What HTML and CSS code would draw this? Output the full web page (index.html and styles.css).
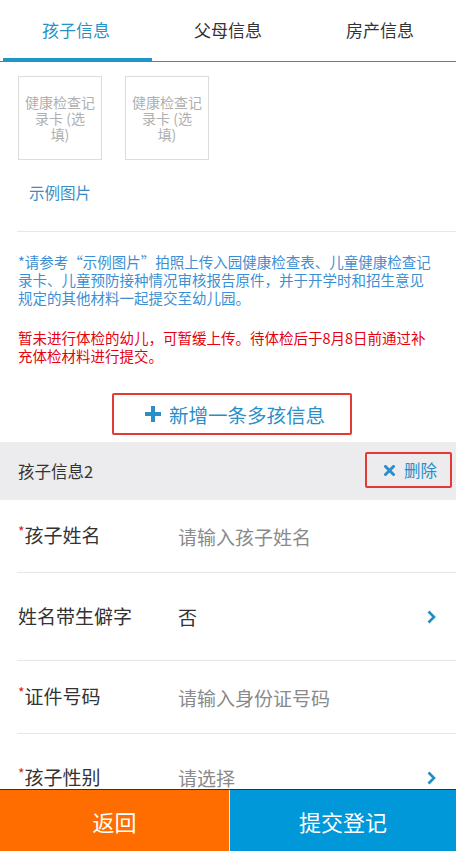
FILE: index.html
```html
<!DOCTYPE html>
<html lang="zh-CN">
<head>
    <meta charset="UTF-8">
    <meta name="viewport" content="width=device-width, initial-scale=1.0">
    <title>孩子信息</title>
    <link rel="stylesheet" href="styles.css">
</head>
<body>
    <div class="tabs">
        <div class="tab active">孩子信息</div>
        <div class="tab">父母信息</div>
        <div class="tab">房产信息</div>
    </div>

    <div class="upload-section">
        <div class="thumbs">
            <div class="thumb">健康检查记<br>录卡 (选<br>填)</div>
            <div class="thumb">健康检查记<br>录卡 (选<br>填)</div>
        </div>
        <div class="example-link">示例图片</div>
    </div>

    <div class="notes">
        <p class="note-blue">*请参考“示例图片”拍照上传入园健康检查表、儿童健康检查记录卡、儿童预防接种情况审核报告原件，并于开学时和招生意见规定的其他材料一起提交至幼儿园。</p>
        <p class="note-red">暂未进行体检的幼儿，可暂缓上传。待体检后于8月8日前通过补充体检材料进行提交。</p>
    </div>

    <div class="add-wrap">
        <button type="button" class="add-btn">
            <svg width="16" height="16" viewBox="0 0 16 16"><rect x="6" y="0" width="4" height="16" fill="#2a8fc9"/><rect x="0" y="6" width="16" height="4" fill="#2a8fc9"/></svg>
            新增一条多孩信息
        </button>
    </div>

    <div class="child-head">
        <span>孩子信息2</span>
        <button type="button" class="del-btn">
            <svg width="11" height="11" viewBox="0 0 11 11"><path d="M1.5 1.5 L9.5 9.5 M9.5 1.5 L1.5 9.5" stroke="#2a8fc9" stroke-width="3" stroke-linecap="round"/></svg>
            删除
        </button>
    </div>

    <div class="fields">
        <div class="field-row">
            <div class="label"><span class="req">*</span>孩子姓名</div>
            <div class="value placeholder">请输入孩子姓名</div>
        </div>
        <div class="field-row tall">
            <div class="label">姓名带生僻字</div>
            <div class="value">否</div>
            <svg class="chevron" width="9" height="14" viewBox="0 0 9 14"><polyline points="1.5,1.5 7,7 1.5,12.5" fill="none" stroke="#1d8fc4" stroke-width="2.6"/></svg>
        </div>
        <div class="field-row">
            <div class="label"><span class="req">*</span>证件号码</div>
            <div class="value placeholder">请输入身份证号码</div>
        </div>
        <div class="field-row tall">
            <div class="label"><span class="req">*</span>孩子性别</div>
            <div class="value placeholder">请选择</div>
            <svg class="chevron" width="9" height="14" viewBox="0 0 9 14"><polyline points="1.5,1.5 7,7 1.5,12.5" fill="none" stroke="#1d8fc4" stroke-width="2.6"/></svg>
        </div>
    </div>

    <div class="bottom-bar">
        <button type="button" class="btn-back">返回</button>
        <button type="button" class="btn-submit">提交登记</button>
    </div>
</body>
</html>
```

FILE: styles.css
```css
body {
    margin: 0;
    background: #fff;
    font-family: "Noto Sans CJK SC", "Noto Sans", sans-serif;
    color: #333;
    padding-bottom: 61px;
}
p {
    margin: 0;
}
button {
    font-family: inherit;
    background: none;
    cursor: pointer;
}
.tabs {
    display: flex;
    height: 61px;
    border-bottom: 1px solid #1e96c8;
}
.tab {
    flex: 1;
    display: flex;
    align-items: center;
    justify-content: center;
    font-size: 17px;
    color: #333;
    position: relative;
    padding-bottom: 3px;
}
.tab.active {
    color: #2494c6;
}
.tab.active::after {
    content: "";
    position: absolute;
    left: 3px;
    right: 0;
    bottom: 0;
    height: 3px;
    background: #1e96c8;
}
.upload-section {
    padding: 14px 18px 28px 1px;
    margin-left: 17px;
    border-bottom: 1px solid #e8e8e8;
}
.thumbs {
    display: flex;
    gap: 23px;
}
.thumb {
    width: 82px;
    height: 82px;
    border: 1px solid #dcdcdc;
    display: flex;
    align-items: center;
    justify-content: center;
    text-align: center;
    font-size: 14px;
    line-height: 16px;
    color: #b0b0b0;
}
.example-link {
    margin-top: 21px;
    padding-left: 11px;
    font-size: 15.5px;
    line-height: 22px;
    color: #3a8dc4;
}
.notes {
    padding: 21px 18px 0;
}
.note-blue {
    font-size: 14.5px;
    line-height: 18px;
    color: #3c8fd3;
}
.note-red {
    margin-top: 22px;
    font-size: 14.5px;
    line-height: 18px;
    color: #e8000e;
}
.add-wrap {
    display: flex;
    padding: 28px 0 0 112px;
}
.add-btn {
    width: 240px;
    height: 42px;
    border: 2px solid #e53935;
    border-radius: 2px;
    display: flex;
    align-items: center;
    justify-content: center;
    gap: 8px;
    font-size: 19.5px;
    color: #2a8fc9;
    padding: 0 0 0 6px;
}
.child-head {
    margin-top: 7px;
    height: 58px;
    background: #ececee;
    display: flex;
    align-items: center;
    justify-content: space-between;
    padding: 0 4px 0 18px;
    font-size: 16.5px;
    color: #333;
}
.del-btn {
    width: 87px;
    height: 36px;
    border: 2px solid #e53935;
    border-radius: 2px;
    display: flex;
    align-items: center;
    justify-content: center;
    gap: 9px;
    font-size: 16.5px;
    color: #2a8fc9;
    padding: 0 0 0 4px;
    margin-top: -2px;
}
.field-row {
    display: flex;
    align-items: center;
    height: 72px;
    margin-left: 17px;
    padding-left: 1px;
    padding-right: 20px;
    border-bottom: 1px solid #e6e6e6;
    font-size: 19px;
}
.field-row.tall {
    height: 87px;
}
.label {
    width: 160px;
    color: #333;
    margin-top: -3px;
}
.req {
    color: #e0201a;
    font-size: 14px;
    vertical-align: top;
    line-height: 20px;
}
.value {
    flex: 1;
    color: #333;
}
.value.placeholder {
    color: #8a8a8a;
}
.chevron {
    flex: none;
}
.bottom-bar {
    position: fixed;
    left: 0;
    right: 0;
    bottom: 0;
    height: 61px;
    display: flex;
    border-top: 1px solid #333;
}
.bottom-bar button {
    border: none;
    color: #fff;
    font-size: 22px;
}
.btn-back {
    width: 229px;
    background: #ff6d00 !important;
}
.btn-submit {
    flex: 1;
    background: #0098d8 !important;
    border-left: 1px solid #f2e3c8 !important;
}
```
